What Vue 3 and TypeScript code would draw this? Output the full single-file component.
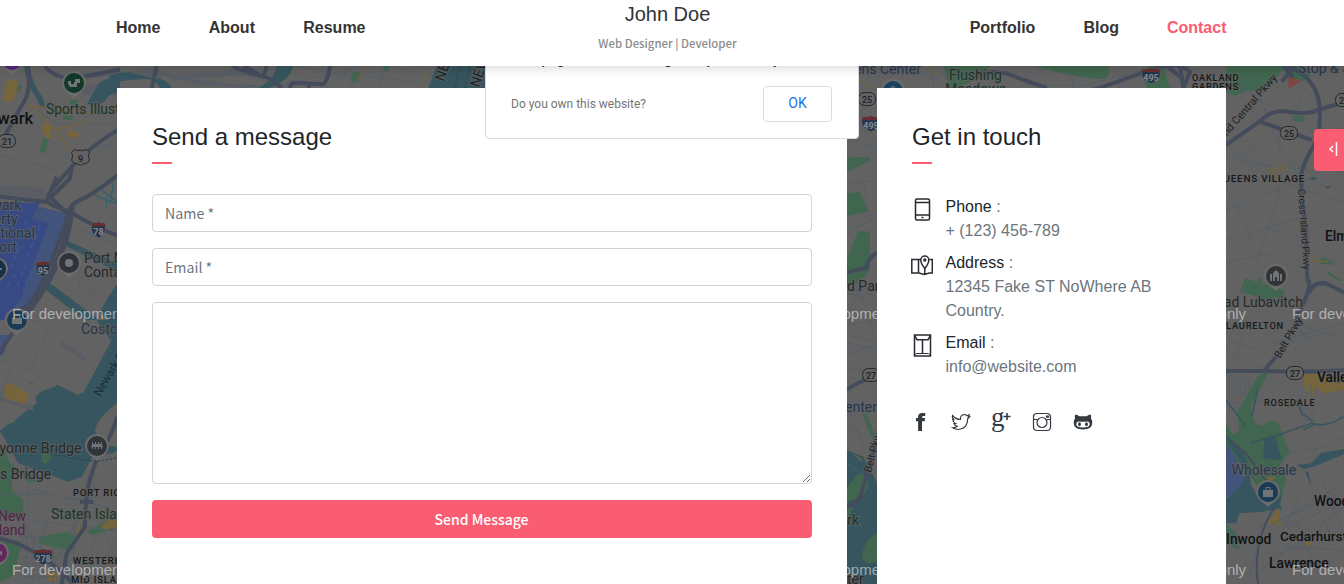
<script setup lang="ts">
interface Label {
  x: number
  y: number
  text: string
  size: number
  kind: string
  rotate?: number
}

const leftNav = ['Home', 'About', 'Resume']
const rightNav = ['Portfolio', 'Blog', 'Contact']

const labels: Label[] = [
  { x: 46, y: 114, text: 'Sports Illustrated', size: 13.8, kind: 'green' },
  { x: -23, y: 123.500, text: 'Newark', size: 16.5, kind: 'city' },
  { x: -26, y: 210, text: 'Newark', size: 14, kind: 'poi' },
  { x: -25, y: 224, text: 'Liberty', size: 14, kind: 'poi' },
  { x: -43.500, y: 238, text: 'International', size: 14, kind: 'poi' },
  { x: -26, y: 252, text: 'Airport', size: 14, kind: 'poi' },
  { x: 84, y: 263, text: 'Port Newark', size: 14, kind: 'grey' },
  { x: 84, y: 277, text: 'Container', size: 14, kind: 'grey' },
  { x: 81, y: 334, text: 'Costco', size: 14, kind: 'poi' },
  { x: 100, y: 397, text: 'Newark Bay', size: 11.5, kind: 'water', rotate: -59 },
  { x: -17, y: 453, text: 'Bayonne Bridge', size: 14.2, kind: 'grey' },
  { x: -49, y: 479, text: 'Goethals Bridge', size: 14.2, kind: 'grey' },
  { x: 73, y: 496, text: 'PORT RICHMOND', size: 9.5, kind: 'area' },
  { x: 51, y: 519, text: 'Staten Island', size: 14, kind: 'green' },
  { x: -2, y: 521, text: 'New', size: 14, kind: 'purple' },
  { x: -56, y: 535, text: 'Staten Island', size: 14, kind: 'purple' },
  { x: 73, y: 564, text: 'WESTERLEIGH', size: 9.5, kind: 'area' },
  { x: 71, y: 583, text: 'MID ISLAND', size: 9.5, kind: 'area' },
  { x: 444, y: 82, text: 'NEW', size: 14, kind: 'road', rotate: -72 },
  { x: 479, y: 88, text: 'NEW', size: 14, kind: 'road', rotate: -72 },
  { x: 839, y: 74, text: 'ueens Center', size: 14, kind: 'poi' },
  { x: 949, y: 80, text: 'Flushing', size: 14, kind: 'green' },
  { x: 945, y: 94, text: 'Meadows', size: 14, kind: 'green' },
  { x: 1192, y: 81, text: 'OAKLAND', size: 9.2, kind: 'area' },
  { x: 1192, y: 90, text: 'GARDENS', size: 9.2, kind: 'area' },
  { x: 847, y: 291, text: 'd Park', size: 14, kind: 'grey' },
  { x: 836, y: 412, text: 'Center', size: 14, kind: 'poi' },
  { x: 847, y: 525, text: 'rk', size: 14.5, kind: 'green' },
  { x: 847, y: 584, text: 'ter', size: 14, kind: 'grey' },
  { x: 871, y: 473, text: 'Belt Pkwy', size: 10.5, kind: 'road', rotate: -75 },
  { x: 1298, y: 73, text: 'Stop & Shop', size: 14, kind: 'poi' },
  { x: 1216, y: 149, text: 'Grand Central Pkwy', size: 10.8, kind: 'road', rotate: -49 },
  { x: 1216, y: 182, text: 'QUEENS VILLAGE', size: 9.8, kind: 'area' },
  { x: 1298, y: 189, text: 'Cross Island Pkwy', size: 10, kind: 'road', rotate: 86 },
  { x: 1325, y: 241, text: 'Elmont', size: 13.8, kind: 'city' },
  { x: 1191.500, y: 307, text: 'Chabad Lubavitch', size: 14, kind: 'grey' },
  { x: 1226, y: 329, text: 'LAURELTON', size: 9.3, kind: 'area' },
  { x: 1280, y: 359, text: 'Belt Pkwy', size: 10.5, kind: 'road', rotate: -60 },
  { x: 1317, y: 382, text: 'Valley', size: 13.8, kind: 'city' },
  { x: 1264, y: 406, text: 'ROSEDALE', size: 9.2, kind: 'area' },
  { x: 1231.500, y: 475, text: 'Wholesale', size: 14, kind: 'poi' },
  { x: 1314, y: 506, text: 'Woodmere', size: 13.8, kind: 'city' },
  { x: 1226, y: 544, text: 'Inwood', size: 13.8, kind: 'city' },
  { x: 1280, y: 541, text: 'Cedarhurst', size: 13.5, kind: 'city' },
  { x: 1269, y: 568, text: 'Lawrence', size: 13.8, kind: 'city' },
]

const routes = [
  { x: 7, y: 141, n: '21' },
  { x: 80.500, y: 157.500, n: '9' },
  { x: 867, y: 99, n: '25' },
  { x: 1289, y: 133, n: '25' },
  { x: 1344, y: 100, n: '25' },
  { x: 871, y: 375, n: '27' },
  { x: 1295, y: 373, n: '27' },
]

const interstates = [
  { x: 98.5, y: 230, n: '78' },
  { x: 43, y: 269, n: '95' },
  { x: 43, y: 557, n: '278' },
  { x: 871, y: 124, n: '495' },
  { x: 1151, y: 76, n: '495' },
]

const pins = [
  { x: 74, y: 83, color: '#12382a', icon: 'M-6 -2h3v3h3v-2h1v-3h5v4h-3v4h-7l-2-3z' },
  { x: 69, y: 263, color: '#30343a', icon: 'M-4 0a4 4 0 1 0 8 0a4 4 0 1 0 -8 0z' },
  { x: 17, y: 320, color: '#1b3a54', icon: 'M-5 -2h10v6h-10zM-3 -5h6v3h-1v-2h-4v2h-1z' },
  { x: -4, y: 269, color: '#172f49', icon: 'M-4 -1h10v2h-10z' },
  { x: 97, y: 446, color: '#2f3538', icon: 'M-5-4h1v2h2v-2h1v2h2v-2h1v2h2v-2h1v4h1v1h-1v2h-1v-2h-2v2h-1v-2h-2v2h-1v-2h-2v2h-1v-2h-1v-1h1z' },
  { x: -3, y: 553, color: '#63275b', icon: 'M-3 -3h5v6h-5zM2 0l3 -3v6z' },
  { x: 12, y: 60, color: '#522876', icon: 'M-3 -3h6v6h-6z' },
  { x: 893, y: 91, color: '#1b425e', icon: 'M-2-2v-2q2-2 4 0v2h-1v-1.500h-2v1.500z' },
  { x: 1276, y: 276, color: '#303437', icon: 'M-6 5v-7h2v7zM-3 5v-8l3-3l3 3v8h-2v-4h-2v4zM4 5v-7h2v7z' },
  { x: 1268, y: 492, color: '#183b56', icon: 'M-5-2h10v7h-10zM-2.500-5h5v3h-1v-2h-3v2h-1z' },
]

const watermarks = [314, 570].flatMap((y) =>
  [12, 780, 1036, 1292].map((x) => ({ x, y: y + 5 })),
)

const contacts = [
  { icon: 'phone', title: 'Phone', lines: ['+ (123) 456-789'] },
  { icon: 'map', title: 'Address', lines: ['12345 Fake ST NoWhere AB', 'Country.'] },
  { icon: 'mail', title: 'Email', lines: ['info@website.com'] },
]
</script>

<template>
  <div class="page">
    <svg class="map" viewBox="0 0 1344 584" width="1344" height="584">
      <rect width="1344" height="584" class="land" />

      <!-- Newark and the airport -->
      <g transform="translate(0 60) scale(.33333)">
        <path class="grn" d="M130 235l17 5-13 40-17-5zM45 90l15-16 8 8-18 15zM190 168l28 0 0 12-28 0zM210 120l25 0-5 16-18-3z" />
        <path class="ylw" d="M22 58l32 4-4 35-12 28-32-4 8-30zM135 187l25 15-10 15 8 22-22-7-7-18-7-7zM205 208l36 15-18 14-20-10z" />
        <path class="rail" d="M160 50h200v-20l-130 10zM200 90l160-35v50l-90 0zM0 375l135 10v30h-135z" />
        <path class="wtr" d="M72 18h15q8 40 28 75q20 25 20 50h-15q-5-25-25-50q-18-30-23-75zM360 48q-60 8-70 35l-30 50q50 5 60-18q10-15 40-18z" />
        <path class="wtr2" d="M280 405l80 30M290 380l70 50M320 410v35M340 370l-10 60" />
        <path class="air" d="M0 425l115 15l85 20l-20 80l-65 150l-50 70-65 60z" />
        <path class="air2" d="M0 425l120 5l-25 45l50 15l-55 150l-30 80-60 70z" />
        <path class="runway" d="M75 480l35 60M60 560l-30 65M120 495l-38 95M80 610l-30 70M15 500l35 60M20 680l30-40M95 630l-25 60" />
        <path class="wtr" d="M197 540l155 70v25l-160-80zM146 667l145 108-10 25-146-112zM360 660q-45 60-60 100l40 30h20z" />
        <path class="street" d="M100 145l70 45 180 5M0 285l170 45M230 40l-15 70M155 240l60 70 60 60M280 265l80-20M250 350l70-90 40-40M225 500l135 60M245 650l-10 30 40 30 30-55-10-10z" />
        <path class="ystr" d="M100 145q70 65 115 130M80 135l200 25M160 210l100-25" />
        <path class="road" d="M85 18q8 80-15 110q-35 60-60 110M135 18q20 30 80 40l145-30M360 205q-90 55-140 110t-75 90l60 60M170 350l-30 75q-60-5-140-15M140 425q30 20 70 30q70 45 150 75M205 460q-30 100-70 190t-75 100M360 340q-90 70-120 80t-35 45M215 320l-5 35-55 55" />
        <path class="roadwide" d="M215 440q-10 110-70 220t-90 110" />
      </g>

      <!-- Newark Bay and Staten Island -->
      <g transform="translate(0 320) scale(.33333)">
        <path class="wtr" d="M250 0h110v385l-20 15-60 5-35 65-40 15-150-55-50-90-10-5 115-85-5-30 60-20 15-15 70 35 85-160z" />
        <path class="land" d="M255 0h35l35 50-80 170-12 5-70-35-45 30-80 90h-38v-310zM360 245q-70 45-75 90l35 40 40 8z" />
        <path class="grn" d="M0 385l20 15q0 40 75 65l25 15-30 10-30-30-25 0v50l35 30v50h-70zM0 655l65 10-20 85q-10 30-45 35zM125 400l25 0 5 15-18 17-15-8zM118 650l85-15 30 20-35 35-80-20zM260 635l70-40 30 10-10 20-75 20zM90 185l12 3-4 6-10-3z" />
        <path class="ylw" d="M15 190l30 5 43 30-15 30-55-15-5-25zM325 600l35 0v20l-50 10-10-10zM232 615h16l-12 45-5-10zM145 750l30 15-10 20-25-5z" />
        <path class="air" d="M0 45l25 0-10 50-15 15z" />
        <path class="rail" d="M180 60l80 50-5 15-70-45zM0 230l100 30v12l-100-30z" />
        <path class="street" d="M95 0l55 15-60 140-90-35M35 140l-35 90M0 525l150-4M85 430v170l275 35M110 510l220 55M145 590l-40 150M175 540l185-15M230 560l-15 230M50 560l100 190-85 30M280 560l80 190M150 760l60-120 70-140M290 640l-40 140M330 440l-70 60M60 650h100v140M60 690h110M60 710h110M60 730h110M60 750h110M60 770h110M80 650v140M100 650v140M120 650v140" />
        <path class="road" d="M0 100q20-40 38-60M0 655q90 20 170 90t40 50M290 420q-25 60-30 110t-5 90l-55 80-15 92M350 290q-5 40-58 125M240 545h40" />
        <path class="dash" d="M140 400l145 25 70-12" />
      </g>

      <!-- Hudson shoreline -->
      <g transform="translate(110 60) scale(.33333)">
        <path class="wtr" d="M0 45q60-18 120 0t65 40h-35q-10-30-50-28t-100 10zM500 18h50q-15 50-75 66h-40q55-15 65-66zM400 84h50l-20-10zM980 18h145v66h-170z" />
        <path class="rail" d="M100 18l80 20-40 20-80-20zM150 45l280-20v20l-200 10 220 25v8l-200-15z" />
        <path class="grn" d="M728 35l24 5-6 28-24-5zM822 18h20l-10 18-12-4z" />
        <path class="street" d="M180 60l350-35M520 75l230-57M650 80l80-62M720 84l50-66M780 84l55-66M560 20l150 25 270 25M820 30l-10 54M870 20l80 45M350 30l190 54" />
        <path class="ystr" d="M770 20l-30 45M950 30l-15 54" />
        <path class="road" d="M140 18l-15 66M365 18q60 25 90 30t60 36M660 18q-5 40-20 55l-90-5M400 18l60 32 10-32M540 84q5-25 15-10M595 84q5-20 15-10" />
        <path class="dash" d="M1050 18l-15 66M1080 18l-15 66" />
      </g>

      <!-- Queens -->
      <g transform="translate(840 60) scale(.33333)">
        <path class="grn" d="M310 18h140l-20 30-80 36h-20zM580 18h225q10 20-10 40-90-5-215-40zM920 18h50l20 66h-70l-10-30zM1090 84l80-20v20z" />
        <path class="street" d="M45 84l85-66M280 18v66M300 30l40 54M420 18v66M540 18l50 66M610 18l-20 40M550 75h190l170-45M690 18l10 66M760 50v34M830 18l10 66M840 50l160-20M1040 18l80 40M200 30l100 30" />
        <path class="ystr" d="M60 60l30 25M270 18l20 30" />
        <path class="road" d="M400 45q50-15 100-4l120 43M760 90q90-30 170-60t120 5l-20 50M980 18l50 40M1020 18l10 66" />
        <path class="grn" d="M20 292l70-2v12l-70 33zM20 400l40-5 25 60-65 12zM90 515v112l-30 40-40 15v-85l35-85z" />
        <path class="street" d="M20 180l90-55M20 255l90-80M20 230l90 40M20 280l90-30M20 370l90-8M20 490l90-30M20 510l90-32M70 360l15 110M50 180l60 90M20 700l90 20M20 680l90 30M40 660l50 110M80 650l-50 100" />
        <path class="road" d="M20 638l60-15q0-25 30-45" />
      </g>

      <!-- Jamaica Bay -->
      <g transform="translate(840 320) scale(.33333)">
        <path class="wtr" d="M20 390l50 20 42 80v302h-92zM0 395l30 5 40 60-30 10z" />
        <path class="grn" d="M65 280h15l30 75v25l-10-15zM50 465q30-15 35 30-5 40-65 50v-40zM112 638q-35 15-47 65 5 40 47 20zM20 545l20 20-20 35z" />
        <path class="ylw" d="M98 305l12 3v10zM35 398l30 20v8z" />
        <path class="street" d="M20 15l90-15M20 70l90 15M20 105l90-30M90 0l15 75M20 150l60 0 30 40M20 230l60 55M25 260l45 125M50 240l50 95M20 320l70 30M20 430l35 25M20 15v30l90 20" />
        <path class="road" d="M20 210q20-15 55-30M110 370q-30 80-40 130t-50 60" />
      </g>

      <!-- Eastern Queens -->
      <g transform="translate(1220 60) scale(.33333)">
        <path class="grn" d="M18 18h180l-60 75h-60l-35 15-25-15zM198 18h50l25 30-20 15-60-15zM222 168h30v18l-33-3zM75 655l115 35 5 30-30-10-20 10-85-25zM305 590l35 15v10l-40-3zM325 635l40 25-5 5-40-25zM110 660l15-7v20z" />
        <path class="red" d="M205 50l40 12-40 25z" />
        <path class="street" d="M18 70l100 40 60 150M90 18l-25 90 60 80M18 250q50 50 75 65t100 55l180 60M18 280l65 30M18 380l80 160M80 240l100 150-70 225-45 85M18 450l165-65M18 540l220-65M18 610l120-30 180 100M110 240l-90 100M180 190v80l60 80M230 55l70 85 73 90M135 500l210 110M190 230q60 10 100 0M280 160l90-30M300 380l70-50M250 100l-40 90M100 310l160 20" />
        <path class="road" d="M18 255l100-70q40-40 85-30 60 10 90-5l75-22M120 185l155 55M200 18q60 20 85 70t8 150q-45 70-50 110l2 60q15 100 15 180t7 75q5 40-45 115M267 700q10-35 50-30l60 30M185 65l40-45M190 18l30 35" />
        <path class="ystr" d="M135 335l65-20M145 345l60-20M285 590l-5 15 45 0" />
        <path class="wtr" d="M267 355l15-5 10 6-15 5zM312 380l20-3-8 10z" />
      </g>

      <!-- Five Towns -->
      <g transform="translate(1220 320) scale(.33333)">
        <path class="grn" d="M117 165l27-8-20 45-30 50q0 70 35 65l20-15 25 5 35 90-30 40 20 40-20 70-35 0-60-90-66-65v-80l20 30 20-10-5-60 35-60zM18 610l35 35 5 45-40-20z" />
        <path class="air" d="M18 370l25 35 30 70 0 40-55 15z" />
        <path class="wtr" d="M18 360q60 25 65 75l10 60 25 45 60-5 10-20-10 50-50 10-70 5-10 30h-30v-75q35-20 50-50t-10-65zM133 355l35-5 2 20 15 45-15 5-40-5zM229 435l45-5 30-32 68-10v15l-50 20-35 15-35 10zM255 455l10 0 10 45zM175 540l12 30h-8z" />
        <path class="ylw" d="M250 160l122 10v40l-65 10-20-20-10 30-25-30zM145 605l30-40 8 50-35-5zM140 470h30l-20 15zM252 670l25-10-10 25z" />
        <path class="street" d="M18 55l80 30 270-75M80 0l-25 100M140 50l60-50 170 60M18 90l120 60M220 0l100 150M180 70l170-35M170 120l60-100M185 190l60-60M220 180l40 120M270 190l10 90M100 245h30M18 160l100 50M18 190l90 50M28 160v110M40 160v110M52 160v100M64 160v85M76 160v65M88 160v50M18 210l80 20M18 240l60 15M190 410q60-30 90-20l100-40M200 590l170-100M160 610l210-95M190 625l180-80M110 760l260-200M270 520l70 140M230 600l60 160M310 490l60 150M250 510l-75 150M150 710l90-30M200 680l170 10M130 580l-40 200" />
        <path class="wstr" d="M90 370q50-15 100-30l85-30q45 15 95-20M250 330l35-18M230 240l15 40 35 25M18 240q30 40 60 80M115 200l-20 90" />
        <path class="road" d="M18 153h110q130 5 244-2M130 155l38-45M235 0l10 15" />
        <path class="road thin" d="M165 560q-40 60-50 125t0 107M18 350l60 50 65 90-5 60" />
      </g>

      <g v-for="pin in pins" :key="`${pin.x}-${pin.y}`" :transform="`translate(${pin.x} ${pin.y})`">
        <path class="pinback" d="M-12 0a12 12 0 1 1 24 0q-1 8-10 13l-2 2-2-2q-9-5-10-13z" />
        <circle r="10" :fill="pin.color" />
        <path :d="pin.icon" class="pinicon" />
      </g>

      <text
        v-for="label in labels"
        :key="label.text + label.x + label.y"
        :class="['label', label.kind]"
        :font-size="label.size"
        :transform="`translate(${label.x} ${label.y}) rotate(${label.rotate ?? 0})`"
      >{{ label.text }}</text>

      <g v-for="route in routes" :key="`r${route.x}`" :transform="`translate(${route.x} ${route.y})`">
        <path v-if="route.n === '9'" d="M-6-8q3 2 6 .5 3 1.500 6-.5l3 3q-2 3-.5 6t-3.500 5q-3 0-5 2-2-2-5-2-5-2-3.500-5t-.5-6z" class="shield" />
        <rect v-else x="-8.500" y="-6.500" width="17" height="13" rx="6" class="shield" />
        <text y="4" class="num">{{ route.n }}</text>
      </g>
      <g v-for="item in interstates" :key="`i${item.x}`" :transform="`translate(${item.x} ${item.y})`">
        <path
          :transform="item.n.length > 2 ? 'scale(1.35 1)' : undefined"
          d="M-6-7q3 1 6-1 3 2 6 1l1 5q0 6-7 10-7-4-7-10z"
          class="inter"
        />
        <path :transform="item.n.length > 2 ? 'scale(1.35 1)' : undefined" d="M-6-7q3 1 6-1 3 2 6 1l1 3h-14z" class="interred" />
        <text y="4.500" class="num pale">{{ item.n }}</text>
      </g>

      <text v-for="mark in watermarks" :key="`w${mark.x}-${mark.y}`" :x="mark.x" :y="mark.y" class="mark">For development purposes only</text>
    </svg>

    <header class="header">
      <nav class="nav nav-left">
        <a v-for="item in leftNav" :key="item">{{ item }}</a>
      </nav>
      <div class="brand">
        <div class="name">John Doe</div>
        <div class="role">Web Designer | Developer</div>
      </div>
      <nav class="nav nav-right">
        <a v-for="item in rightNav" :key="item" :class="{ active: item === 'Contact' }">{{ item }}</a>
      </nav>
    </header>

    <div class="dialog">
      <p class="dialog-title">This page can't load Google Maps correctly.</p>
      <div class="dialog-row">
        <span>Do you own this website?</span>
        <button type="button">OK</button>
      </div>
    </div>

    <main class="cards">
      <section class="card">
        <h2>Send a message</h2>
        <form class="form" @submit.prevent>
          <input type="text" placeholder="Name *" />
          <input type="email" placeholder="Email *" />
          <textarea></textarea>
          <button type="submit">Send Message</button>
        </form>
      </section>

      <section class="card">
        <h2>Get in touch</h2>
        <ul class="contacts">
          <li v-for="item in contacts" :key="item.title">
            <svg width="22" height="24" viewBox="0 0 22 24" class="line">
              <g v-if="item.icon === 'phone'">
                <rect x="4.500" y="2" width="14" height="21" rx="1.500" />
                <path d="M4.500 5.500h14M4.500 18h14" />
                <path d="M10.500 20.500h2" />
              </g>
              <g v-else-if="item.icon === 'map'" transform="translate(0 1)">
                <path d="M10 5.500H.8v13.500h7l5.500 1.500 5-1.500h3V5.500h-3M7.500 5.500v13.500M13.800 14v6" />
                <path d="M13.800 14.500q-4-5-4-8.500a4 4 0 0 1 8 0q0 3.500-4 8.500z" fill="#fff" />
                <circle cx="13.800" cy="6" r="1" />
              </g>
              <g v-else transform="translate(0 .5)">
                <path d="M3.500 1.500h16v21h-16z" />
                <path d="M3.500 2l2.500 4.200h11l2.500-4.200M11.500 6.200v14" />
                <path d="M3.500 21.500l2-1.500h12l2 1.500" class="fine" />
              </g>
            </svg>
            <div>
              <div class="term">{{ item.title }} <span>:</span></div>
              <div v-for="line in item.lines" :key="line" class="value">{{ line }}</div>
            </div>
          </li>
        </ul>
        <div class="social">
          <svg viewBox="0 0 20 20"><path class="solid" d="M12.700 5V3.900q0-.9 1-.9h2V0h-3Q8.600 0 8.600 4v1H6.500v3.200h2.100V18h3.900V8.200h2.700l.4-3.200z" transform="translate(-2.500 1)" /></svg>
          <svg viewBox="0 0 20 20"><path class="ink" d="M1.500 3.500q3.500 4 8 4 -.4-4.500 3.500-5 2 0 3 1.200l2.300-.9-1 2.200 1.200-.2-1.800 2q0 10-9.500 10.700-3.200 0-5.500-1.700 3 0 4.600-1.500-2.600-.5-3.300-2.700l1.500-.1Q1.800 10 1.800 7.400l1.500.5Q.7 5.800 1.500 3.500z" transform="translate(-1 0)" /></svg>
          <svg viewBox="0 0 20 20"><text x="-1" y="13.500" class="g-letter">g</text><path class="ink gp" d="M11.500 4.500h7M15 1v7" /></svg>
          <svg viewBox="0 0 20 20"><g class="ink"><rect x="1.500" y="1.500" width="17" height="17" rx="3.500" /><circle cx="10" cy="10.500" r="5" /><path d="M1.500 7.500h4M14.500 7.500h4M14.500 4h2v1.200h-2z" /></g></svg>
          <svg viewBox="0 0 20 20"><path class="solid" d="M2.200 2.500q2 0 4.300 1.800h7q2.300-1.800 4.300-1.800.7 2 .2 3.900 1.300 1.600 1.300 4.100 0 7-9.300 7T.7 10.500q0-2.500 1.300-4.100-.5-1.900.2-3.900z" /><path fill="#fff" d="M6 9.500q4 .6 8 0 2.700 0 2.700 2.800 0 3.200-6.700 3.200t-6.700-3.200q0-2.800 2.700-2.800z" /><ellipse class="solid" cx="6.500" cy="12.200" rx="1.400" ry="2" /><ellipse class="solid" cx="13.500" cy="12.200" rx="1.400" ry="2" /></svg>
        </div>
      </section>
    </main>

    <button type="button" class="toggle">
      <svg width="12" height="16" viewBox="0 0 12 16"><path d="M6 5l-3 3 3 3M9.500 1v14" /></svg>
    </button>
  </div>
</template>

<style>
body {
  margin: 0;
  overflow: hidden;
}
</style>

<style scoped>
.page {
  position: relative;
  width: 1344px;
  height: 584px;
  overflow: hidden;
  font: 16px/24px 'Liberation Sans', Arial, sans-serif;
  color: #212529;
}
.map { position: absolute; inset: 0; }
.land { fill: #626262; }
.wtr { fill: #36555f; }
.grn { fill: #40664f; }
.ylw { fill: #75643c; }
.red { fill: #7d4641; }
.air { fill: #43547c; }
.air2 { fill: #374a84; }
.rail { fill: #5a5d63; }
.runway, .street, .road, .roadwide, .ystr, .wtr2, .wstr, .dash { fill: none; }
.runway { stroke: #445690; stroke-width: 4; stroke-dasharray: 18 10; }
.street { stroke: #525e69; stroke-width: 2.500; }
.ystr { stroke: #75643c; stroke-width: 4; }
.wtr2 { stroke: #35616c; stroke-width: 4; }
.wstr { stroke: #37565f; stroke-width: 5; }
.road { stroke: #444b5b; stroke-width: 12; stroke-linejoin: round; }
.road.thin { stroke-width: 6; }
.roadwide { stroke: #444b5b; stroke-width: 19; }
.dash { stroke: #2e4047; stroke-width: 3; stroke-dasharray: 7 5; }
.pinback { fill: #6c6c6c; }
.pinicon { fill: #707577; }
.label { font-family: Roboto, sans-serif; paint-order: stroke; stroke: #626262; stroke-opacity: .75; stroke-width: 2px; }
.poi { fill: #27364e; }
.green { fill: #1b3529; }
.grey { fill: #26292c; }
.purple { fill: #522347; }
.water { fill: #172e3a; stroke: none; }
.city { fill: #111213; font-weight: 500; }
.area { fill: #161819; font-weight: 500; letter-spacing: .8px; }
.road.label { fill: #202225; stroke: #626262; stroke-width: 2px; }
.shield { fill: #626262; stroke: #242628; stroke-width: 1; }
.num { font: 500 9px Roboto, sans-serif; text-anchor: middle; fill: #202124; }
.num.pale { fill: #858b91; font-weight: 700; }
.inter { fill: #27364b; stroke: #646464; stroke-width: .7; }
.interred { fill: #672e30; }
.mark { font: 15px 'Liberation Sans', Arial, sans-serif; fill: #fff; fill-opacity: .5; }

.header {
  position: relative;
  z-index: 3;
  box-sizing: border-box;
  display: grid;
  grid-template-columns: 1fr 180px 1fr;
  height: 66px;
  padding: 0 117px 0 116px;
  background: #fff;
  box-shadow: 0 2px 10px rgba(0, 0, 0, .16);
}
.nav { display: flex; gap: 48.300px; padding-top: 16px; font-weight: 700; color: #343434; }
.nav-right { justify-content: flex-end; gap: 48px; margin-right: .5px; }
.active { color: #fa5c71; }
.brand { margin-left: -8px; text-align: center; }
.name { padding-top: 2px; font-size: 20px; line-height: 24px; color: #2f3337; }
.role { padding-top: 7px; font: 500 11.400px/20px 'Noto Sans CJK SC', sans-serif; color: #8c8c8c; white-space: nowrap; }

.dialog {
  position: absolute;
  z-index: 2;
  top: 30px;
  left: 485px;
  box-sizing: border-box;
  width: 374px;
  height: 109px;
  padding: 18px 26px 0 25px;
  border: 1px solid #dadce0;
  border-radius: 4px;
  background: #fff;
  font-family: Roboto, sans-serif;
}
.dialog-title { margin: 0; font-size: 14px; line-height: 20px; font-weight: 500; color: #202124; white-space: nowrap; }
.dialog-row { display: flex; align-items: center; justify-content: space-between; padding-top: 17px; font-size: 12px; color: #757575; }
.dialog-row button { width: 69px; height: 36px; margin: 0; padding: 0 0 2px; border: 1px solid #dadce0; border-radius: 4px; background: #fff; font: 14px Roboto, sans-serif; color: #1a73e8; }

.cards {
  position: relative;
  z-index: 1;
  display: grid;
  grid-template-columns: 730px 349px;
  gap: 30px;
  padding: 22px 0 0 117px;
  height: 496px;
}
.card { padding: 34px 35px 35px; background: #fff; }
h2 { margin: 0 0 30px; font-size: 24px; line-height: 29px; font-weight: 400; }
h2::after { content: ''; display: block; width: 20px; height: 2px; margin-top: 11px; background: #fa5c71; }
.form { display: flex; flex-direction: column; gap: 16px; }
.form input, .form textarea {
  box-sizing: border-box;
  width: 100%;
  height: 38px;
  margin: 0;
  padding: 0 12px;
  border: 1px solid #ced4da;
  border-radius: 4px;
  background: #fff;
  font: 14.200px 'Noto Sans CJK SC', sans-serif;
}
.form input::placeholder { color: #6c757d; opacity: 1; }
.form textarea { height: 182px; }
.form button { height: 38px; padding: 0 7px 0 6px; border: 0; border-radius: 4px; background: #fa5c71; color: #fff; font: 500 14px 'Noto Sans CJK SC', sans-serif; }

.contacts { display: flex; flex-direction: column; gap: 8px; margin: 31px 0 0; padding: 0; list-style: none; }
.contacts li { display: flex; gap: 12.500px; margin-left: -1px; }
.contacts svg { flex: none; margin-top: 2px; }
.term { color: #212529; }
.term span, .value { color: #6c757d; }
.line { fill: none; stroke: #272b31; stroke-width: 1.500; }
.line .fine { stroke-width: 1; }
.social { display: flex; gap: 20.300px; margin-top: 33px; margin-left: -.5px; }
.social svg { width: 20px; height: 20px; overflow: visible; }
.solid { fill: #343a40; }
.ink { fill: none; stroke: #343a40; stroke-width: 1.200; }
.gp { stroke-width: 1.600; }
.g-letter { font: 27px 'Liberation Serif', serif; fill: #343a40; }

.toggle {
  position: absolute;
  z-index: 2;
  top: 129px;
  right: 0;
  display: flex;
  align-items: center;
  justify-content: flex-end;
  width: 30px;
  height: 42px;
  padding: 0 5px 3px 0;
  border: 0;
  border-radius: 4px 0 0 4px;
  background: #fa5c71;
}
.toggle path { fill: none; stroke: #fff; stroke-width: 1.500; }
</style>
